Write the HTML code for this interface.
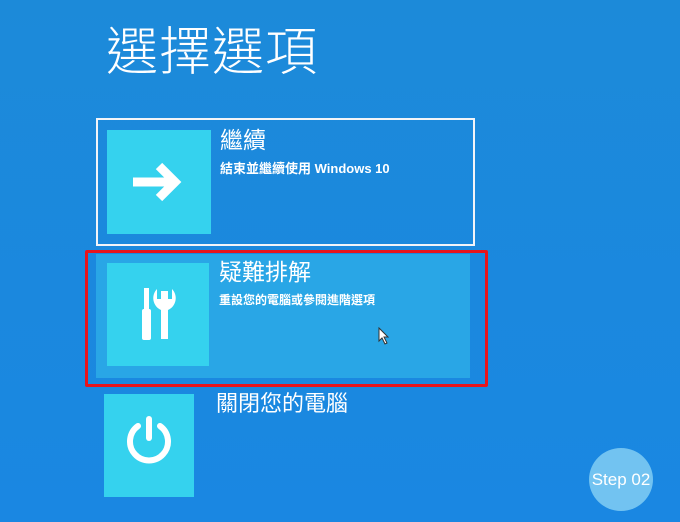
<!DOCTYPE html>
<html><head><meta charset="utf-8"><style>
body{margin:0;width:680px;height:522px;overflow:hidden;background:linear-gradient(180deg,#1c8ad9 0%,#1a87e2 100%);font-family:"Liberation Sans","Noto Sans CJK TC",sans-serif;color:#fff;position:relative}
.a{position:absolute}
.tile{position:absolute;background:#35d2ee}
</style></head><body>
<div class="a" style="left:106px;top:22px;font-size:52px;line-height:62px;letter-spacing:1px;font-weight:300">選擇選項</div>

<div class="a" style="left:96px;top:118px;border:2px solid #f2f4f8;box-sizing:border-box;width:379px;height:128px"></div>
<div class="tile" style="left:107px;top:130px;width:104px;height:104px"></div>
<svg class="a" style="left:107px;top:130px" width="104" height="104"><path d="M26 52H66" stroke="#fff" stroke-width="9"/><path d="M52 36L68 52L52 68" stroke="#fff" stroke-width="9" fill="none" stroke-linejoin="miter"/></svg>
<div class="a" style="left:220px;top:126px;font-size:23px;line-height:28px">繼續</div>
<div class="a" style="left:220px;top:160px;font-size:13px;line-height:18px;font-weight:bold">結束並繼續使用 Windows 10</div>

<div class="a" style="left:96px;top:254px;width:374px;height:124px;background:#29a6e6"></div>
<div class="a" style="left:85px;top:250px;width:403px;height:137px;border:3px solid #e8141c;box-sizing:border-box;border-radius:2px"></div>
<div class="tile" style="left:107px;top:263px;width:102px;height:103px"></div>
<svg class="a" style="left:107px;top:263px" width="102" height="103">
<rect x="37" y="25" width="5" height="24" fill="#fff"/><rect x="35" y="46" width="9" height="31" rx="2" fill="#fff"/>
<path d="M50 26 A13 13 0 0 0 54 47 V76 H61 V47 A13 13 0 0 0 65 26 V36 H61 V28 H54 V36 H50 Z" fill="#fff"/>
</svg>
<div class="a" style="left:219px;top:258px;font-size:23px;line-height:28px">疑難排解</div>
<div class="a" style="left:219px;top:291px;font-size:12px;line-height:18px;font-weight:bold">重設您的電腦或參閱進階選項</div>
<svg class="a" style="left:378px;top:327px" width="14" height="18"><path d="M1 1V14L4 11L7 17L9 16L6 10H10Z" fill="#fff" stroke="#333" stroke-width="1"/></svg>

<div class="tile" style="left:104px;top:394px;width:90px;height:103px"></div>
<svg class="a" style="left:104px;top:394px" width="90" height="103"><path d="M34 32A19 19 0 1 0 56 32" stroke="#fff" stroke-width="6" fill="none" stroke-linecap="round"/><path d="M45 25V44" stroke="#fff" stroke-width="6" stroke-linecap="round"/></svg>
<div class="a" style="left:216px;top:390px;font-size:22px;line-height:28px">關閉您的電腦</div>

<div class="a" style="left:589px;top:448px;width:64px;height:63px;border-radius:50%;background:#72c3f1;font-size:17px;line-height:63px;text-align:center">Step 02</div>
</body></html>
